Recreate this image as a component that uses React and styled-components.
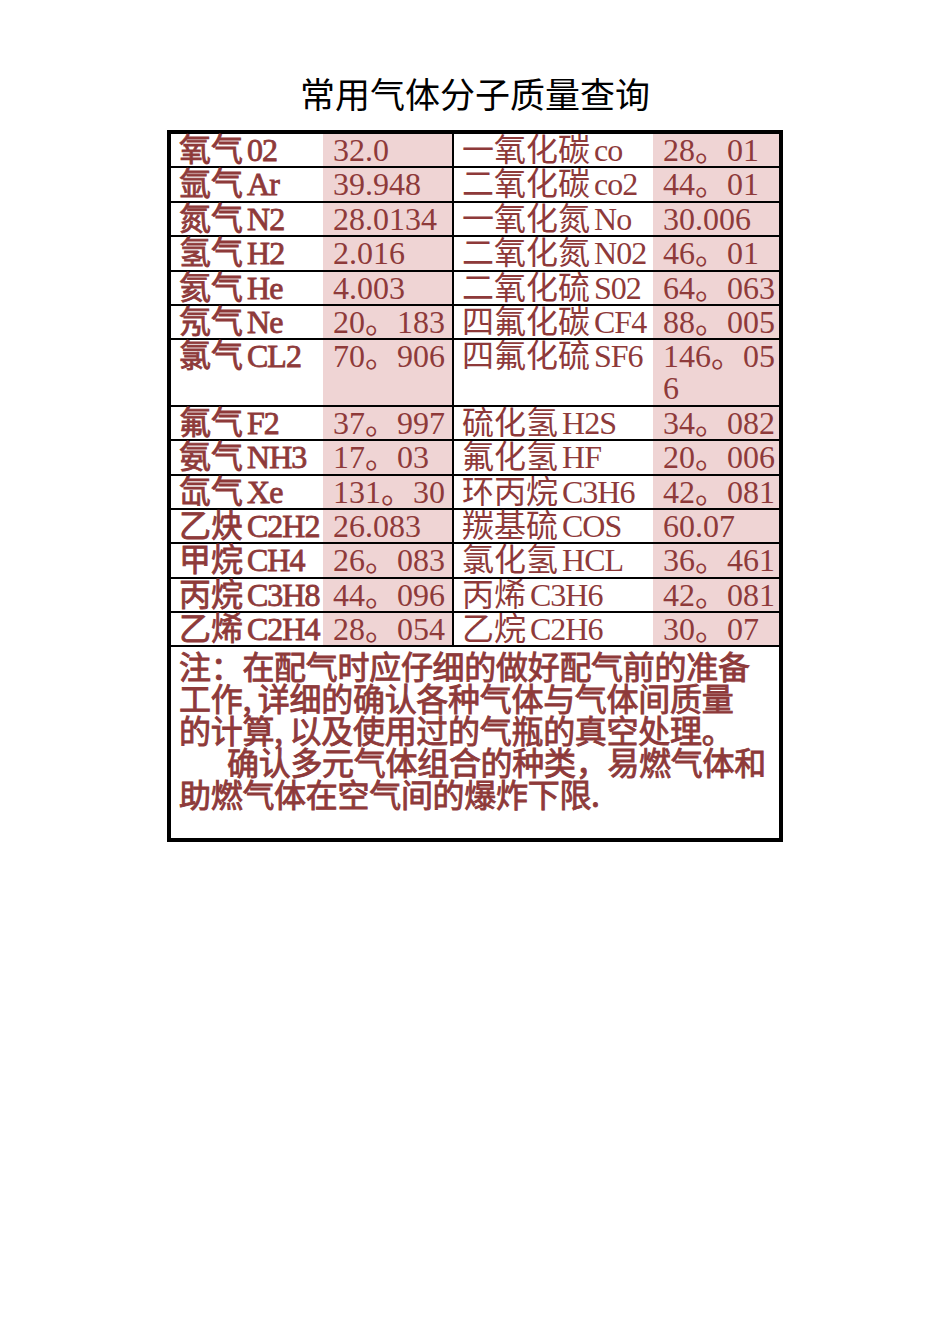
import React from 'react';
import styled, { createGlobalStyle } from 'styled-components';

const GlobalStyle = createGlobalStyle`
  body {
    margin: 0;
    background: #fff;
  }
`;

const Page = styled.div`
  width: 950px;
  min-height: 1344px;
  display: flex;
  flex-direction: column;
  align-items: center;
  font-family: "Liberation Serif", "Noto Sans CJK SC", serif;
`;

const Title = styled.h1`
  margin: 69px 0 0 0;
  height: 61px;
  font-family: "Noto Sans CJK SC", sans-serif;
  font-weight: 400;
  font-size: 35px;
  line-height: 48px;
  color: #000;
`;

const Table = styled.div`
  width: 608px;
  border: 4px solid #000;
  display: grid;
  grid-template-columns: 152px 129px 2px 199px 126px;
  color: #8e3a3a;
`;

const Row = styled.div`
  display: contents;
`;

const Cell = styled.div`
  height: ${p => (p.tall ? '64.4px' : '32.4px')};
  border-bottom: 2px solid #000;
  padding: 0 3px 0 ${p => (p.pink ? '10px' : '8px')};
  background: ${p => (p.pink ? '#efd4d4' : '#fff')};
  font-size: 32px;
  line-height: 32px;
  font-weight: 400;
  -webkit-text-stroke: ${p => (p.bold ? '0.8px currentColor' : '0')};
  white-space: ${p => (p.pink ? 'normal' : 'nowrap')};
  word-break: break-all;
`;

const Divider = styled.div`
  background: #000;
`;

const Formula = styled.span`
  margin-left: 4px;
  letter-spacing: -1px;
`;

const Note = styled.div`
  grid-column: 1 / -1;
  height: 189px;
  padding: 2px 8px 0 8px;
  font-family: "Noto Sans CJK SC", sans-serif;
  font-weight: 400;
  -webkit-text-stroke: 0.9px currentColor;
  font-size: 32px;
  line-height: 32px;
  letter-spacing: -0.3px;
`;

const NoteLine = styled.div`
  white-space: nowrap;
  padding-left: ${p => (p.indent ? '48px' : '0')};
`;

const rows = [
  ['氧气', '02', '32.0', '一氧化碳', 'co', '28。01'],
  ['氩气', 'Ar', '39.948', '二氧化碳', 'co2', '44。01'],
  ['氮气', 'N2', '28.0134', '一氧化氮', 'No', '30.006'],
  ['氢气', 'H2', '2.016', '二氧化氮', 'N02', '46。01'],
  ['氦气', 'He', '4.003', '二氧化硫', 'S02', '64。063'],
  ['氖气', 'Ne', '20。183', '四氟化碳', 'CF4', '88。005'],
  ['氯气', 'CL2', '70。906', '四氟化硫', 'SF6', '146。056'],
  ['氟气', 'F2', '37。997', '硫化氢', 'H2S', '34。082'],
  ['氨气', 'NH3', '17。03', '氟化氢', 'HF', '20。006'],
  ['氙气', 'Xe', '131。30', '环丙烷', 'C3H6', '42。081'],
  ['乙炔', 'C2H2', '26.083', '羰基硫', 'COS', '60.07'],
  ['甲烷', 'CH4', '26。083', '氯化氢', 'HCL', '36。461'],
  ['丙烷', 'C3H8', '44。096', '丙烯', 'C3H6', '42。081'],
  ['乙烯', 'C2H4', '28。054', '乙烷', 'C2H6', '30。07'],
];

const GasRow = ({ data }) => {
  const [name, formula, mass, name2, formula2, mass2] = data;
  const tall = mass2.length > 6;
  return (
    <Row>
      <Cell bold tall={tall}>
        {name}
        <Formula>{formula}</Formula>
      </Cell>
      <Cell pink tall={tall}>{mass}</Cell>
      <Divider />
      <Cell tall={tall}>
        {name2}
        <Formula>{formula2}</Formula>
      </Cell>
      <Cell pink tall={tall}>{mass2}</Cell>
    </Row>
  );
};

const App = () => (
  <Page>
    <GlobalStyle />
    <Title>常用气体分子质量查询</Title>
    <Table>
      {rows.map(r => (
        <GasRow key={r[0]} data={r} />
      ))}
      <Note>
        <NoteLine>注：在配气时应仔细的做好配气前的准备</NoteLine>
        <NoteLine>工作, 详细的确认各种气体与气体间质量</NoteLine>
        <NoteLine>的计算, 以及使用过的气瓶的真空处理。</NoteLine>
        <NoteLine indent>确认多元气体组合的种类，易燃气体和</NoteLine>
        <NoteLine>助燃气体在空气间的爆炸下限.</NoteLine>
      </Note>
    </Table>
  </Page>
);

export default App;
